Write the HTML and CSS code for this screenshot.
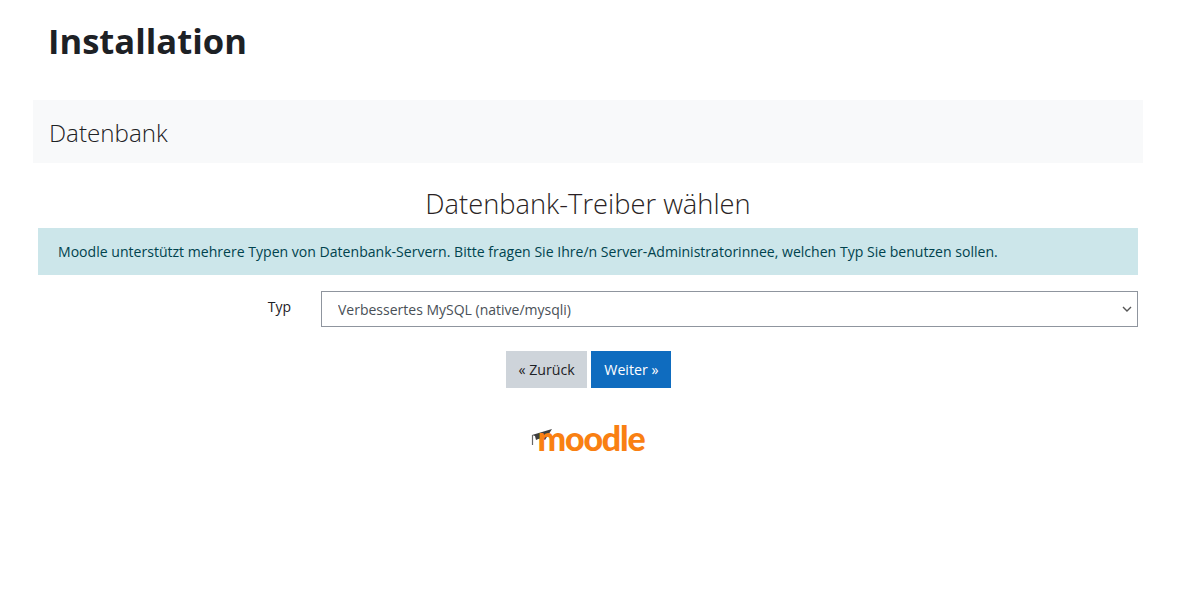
FILE: index.html
```html
<!DOCTYPE html>
<html lang="de">
<head>
  <meta charset="UTF-8" />
  <title>Installation</title>
  <link rel="stylesheet" href="styles.css">
</head>
<body>
  <div class="container">
    <h1 class="page-title">Installation</h1>
    <h2 class="stage-title">Datenbank</h2>
    <h3 class="section-title">Datenbank-Treiber wählen</h3>
    <div class="content">
      <div class="alert">Moodle unterstützt mehrere Typen von Datenbank-Servern. Bitte fragen Sie Ihre/n Server-Administratorinnee, welchen Typ Sie benutzen sollen.</div>
      <form class="form-row">
        <label class="form-label" for="dbtype">Typ</label>
        <select class="form-select" id="dbtype">
          <option>Verbessertes MySQL (native/mysqli)</option>
        </select>
      </form>
    </div>
    <div class="buttons">
      <button class="btn btn-back" type="button">« Zurück</button>
      <button class="btn btn-next" type="button">Weiter »</button>
    </div>
    <div class="logo">
      <svg class="logo-hat" width="22" height="19" viewBox="0 0 22 19">
        <path d="M1 6 L21 0 L14 11 C11 9 8 9 5 11 L4 7 Z" fill="#3f3f3f"/>
        <path d="M1.5 6 L1.5 16" stroke="#666" stroke-width="1.2" fill="none"/>
      </svg>
      <span class="logo-text">moodle</span>
    </div>
  </div>
</body>
</html>
```

FILE: styles.css
```css
body {
  margin: 0;
  background: #fff;
  color: #1d2125;
  font-family: "Open Sans", "Noto Sans", sans-serif;
}
.container {
  width: 1110px;
  margin-left: 33px;
}
.page-title {
  margin: 0;
  padding: 18px 0 0 15px;
  height: 100px;
  box-sizing: border-box;
  font-size: 34.6px;
  line-height: 46px;
  font-weight: 700;
}
.stage-title {
  margin: 0;
  height: 63px;
  padding-left: 16px;
  background: #f8f9fa;
  font-size: 24.2px;
  line-height: 65px;
  font-weight: 300;
}
.section-title {
  margin: 0;
  height: 65px;
  text-align: center;
  font-size: 27.3px;
  line-height: 82px;
  font-weight: 300;
  color: #2a1f24;
}
.content {
  padding: 0 5px;
}
.alert {
  height: 47px;
  padding-left: 20px;
  background: #cce6ea;
  color: #00434e;
  font-size: 14.07px;
  line-height: 47px;
}
.form-row {
  display: flex;
  margin-top: 16px;
}
.form-label {
  width: 253px;
  padding-top: 6px;
  text-align: right;
  font-size: 14px;
  line-height: 20px;
}
.form-select {
  width: 817px;
  height: 36px;
  margin-left: 30px;
  padding-left: 16px;
  appearance: none;
  background: #fff url("data:image/svg+xml,%3Csvg xmlns='http://www.w3.org/2000/svg' width='10' height='6'%3E%3Cpath d='M1 1l4 4 4-4' fill='none' stroke='%23555' stroke-width='1.4'/%3E%3C/svg%3E") no-repeat right 5px center;
  border: 1px solid #8f959e;
  border-radius: 0;
  color: #495057;
  font-family: inherit;
  font-size: 14px;
}
.buttons {
  display: flex;
  justify-content: center;
  gap: 4px;
  margin-top: 24px;
  padding-left: 1px;
}
.btn {
  height: 37px;
  padding: 0 13px;
  border: none;
  border-radius: 0;
  font-family: inherit;
  font-size: 14.2px;
}
.btn-back {
  padding: 0 12.5px 0 13px;
  background: #ced4da;
  color: #1d2125;
}
.btn-next {
  background: #0f6cbf;
  color: #fff;
}
.logo {
  display: flex;
  justify-content: center;
  align-items: flex-end;
  height: 30px;
  margin-top: 35px;
}
.logo-hat {
  margin-right: -16px;
  margin-bottom: 5px;
}
.logo-text {
  font-family: "Lato", sans-serif;
  font-weight: 900;
  font-size: 34px;
  line-height: 30px;
  letter-spacing: -1.2px;
  color: #f98012;
}
```
